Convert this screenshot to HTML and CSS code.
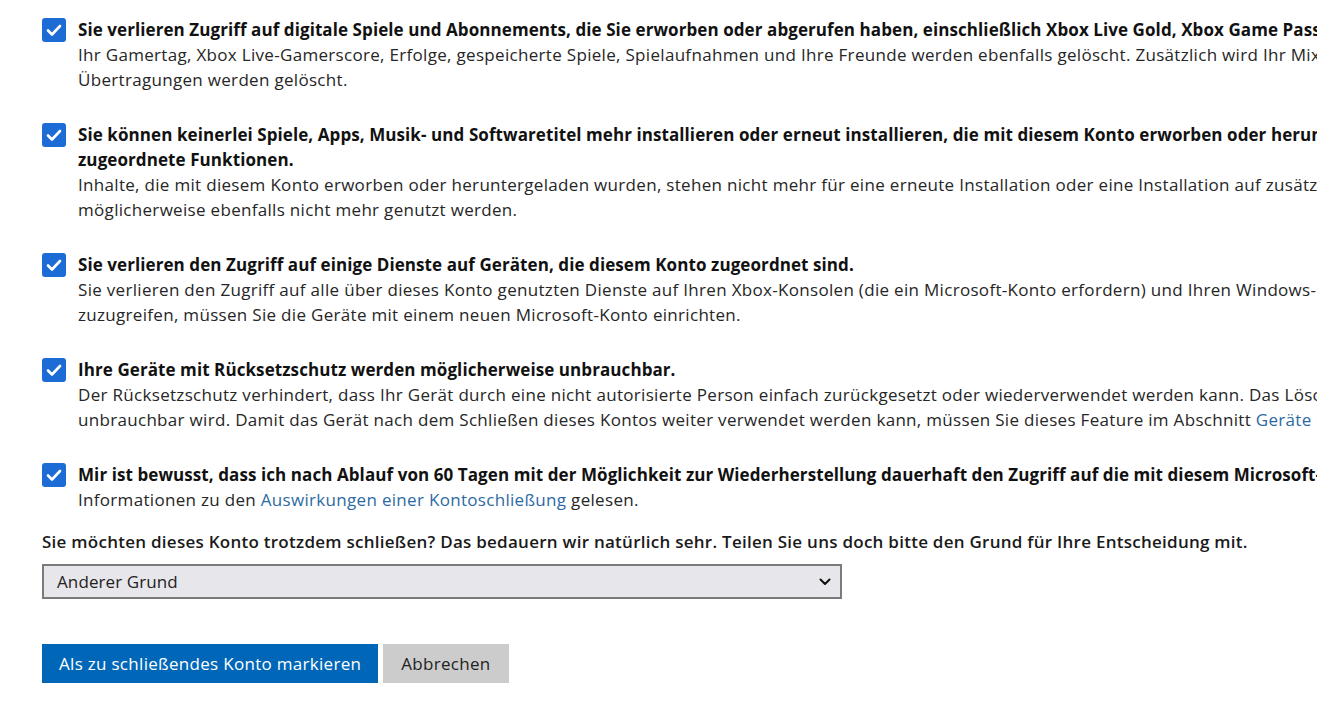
FILE: index.html
```html
<!DOCTYPE html>
<html lang="de">
<head>
<meta charset="utf-8">
<title>Konto schließen</title>
<link rel="stylesheet" href="styles.css">
</head>
<body>
<main class="page">
  <div class="item">
    <span class="check"><svg viewBox="0 0 24 24" width="24" height="24"><path d="M6 12.5l4 4 8-8.5" fill="none" stroke="#fff" stroke-width="2.6" stroke-linecap="round" stroke-linejoin="round"/></svg></span>
    <div class="text">
      <p class="title">Sie verlieren Zugriff auf digitale Spiele und Abonnements, die Sie erworben oder abgerufen haben, einschließlich Xbox Live Gold, Xbox Game Pass und EA Access.</p>
      <p class="desc">Ihr Gamertag, Xbox Live-Gamerscore, Erfolge, gespeicherte Spiele, Spielaufnahmen und Ihre Freunde werden ebenfalls gelöscht. Zusätzlich wird Ihr Mixer-Konto geschlossen, und alle<br>Übertragungen werden gelöscht.</p>
    </div>
  </div>
  <div class="item">
    <span class="check"><svg viewBox="0 0 24 24" width="24" height="24"><path d="M6 12.5l4 4 8-8.5" fill="none" stroke="#fff" stroke-width="2.6" stroke-linecap="round" stroke-linejoin="round"/></svg></span>
    <div class="text">
      <p class="title">Sie können keinerlei Spiele, Apps, Musik- und Softwaretitel mehr installieren oder erneut installieren, die mit diesem Konto erworben oder heruntergeladen wurden, sowie<br>zugeordnete Funktionen.</p>
      <p class="desc">Inhalte, die mit diesem Konto erworben oder heruntergeladen wurden, stehen nicht mehr für eine erneute Installation oder eine Installation auf zusätzlichen Geräten zur Verfügung und<br>möglicherweise ebenfalls nicht mehr genutzt werden.</p>
    </div>
  </div>
  <div class="item">
    <span class="check"><svg viewBox="0 0 24 24" width="24" height="24"><path d="M6 12.5l4 4 8-8.5" fill="none" stroke="#fff" stroke-width="2.6" stroke-linecap="round" stroke-linejoin="round"/></svg></span>
    <div class="text">
      <p class="title">Sie verlieren den Zugriff auf einige Dienste auf Geräten, die diesem Konto zugeordnet sind.</p>
      <p class="desc">Sie verlieren den Zugriff auf alle über dieses Konto genutzten Dienste auf Ihren Xbox-Konsolen (die ein Microsoft-Konto erfordern) und Ihren Windows-Geräten. Um wieder auf diese Dienste<br>zuzugreifen, müssen Sie die Geräte mit einem neuen Microsoft-Konto einrichten.</p>
    </div>
  </div>
  <div class="item">
    <span class="check"><svg viewBox="0 0 24 24" width="24" height="24"><path d="M6 12.5l4 4 8-8.5" fill="none" stroke="#fff" stroke-width="2.6" stroke-linecap="round" stroke-linejoin="round"/></svg></span>
    <div class="text">
      <p class="title">Ihre Geräte mit Rücksetzschutz werden möglicherweise unbrauchbar.</p>
      <p class="desc">Der Rücksetzschutz verhindert, dass Ihr Gerät durch eine nicht autorisierte Person einfach zurückgesetzt oder wiederverwendet werden kann. Das Löschen Ihres Kontos kann dazu führen, dass Ihr Gerät<br>unbrauchbar wird. Damit das Gerät nach dem Schließen dieses Kontos weiter verwendet werden kann, müssen Sie dieses Feature im Abschnitt <a href="#" class="link">Geräte</a> deaktivieren.</p>
    </div>
  </div>
  <div class="item item-last">
    <span class="check"><svg viewBox="0 0 24 24" width="24" height="24"><path d="M6 12.5l4 4 8-8.5" fill="none" stroke="#fff" stroke-width="2.6" stroke-linecap="round" stroke-linejoin="round"/></svg></span>
    <div class="text">
      <p class="title">Mir ist bewusst, dass ich nach Ablauf von 60 Tagen mit der Möglichkeit zur Wiederherstellung dauerhaft den Zugriff auf die mit diesem Microsoft-Konto verbundenen Daten verliere, und ich habe die</p>
      <p class="desc">Informationen zu den <a href="#" class="link">Auswirkungen einer Kontoschließung</a> gelesen.</p>
    </div>
  </div>

  <p class="question">Sie möchten dieses Konto trotzdem schließen? Das bedauern wir natürlich sehr. Teilen Sie uns doch bitte den Grund für Ihre Entscheidung mit.</p>
  <div class="select">
    <span>Anderer Grund</span>
    <svg class="chev" viewBox="0 0 12 8" width="12" height="8"><path d="M1.5 1.5l4.5 4.5 4.5-4.5" fill="none" stroke="#111" stroke-width="2" stroke-linecap="round" stroke-linejoin="round"/></svg>
  </div>

  <div class="actions">
    <button class="btn primary">Als zu schließendes Konto markieren</button>
    <button class="btn secondary">Abbrechen</button>
  </div>
</main>
</body>
</html>
```
FILE: styles.css
```css
html, body {
  margin: 0;
  padding: 0;
  background: #fff;
  overflow: hidden;
}
body {
  font-family: "Open Sans", "Noto Sans", "Liberation Sans", sans-serif;
  font-size: 17px;
  line-height: 25px;
  color: #222;
  letter-spacing: 0.31px;
}
.page {
  padding: 17px 0 0 42px;
  width: 1275px;
  overflow: hidden;
  white-space: nowrap;
}
.item {
  display: flex;
  gap: 12px;
  align-items: flex-start;
  margin-bottom: 30px;
}
.item-last { margin-bottom: 17px; }
.check {
  flex: 0 0 24px;
  width: 24px;
  height: 24px;
  margin-top: 1px;
  border-radius: 3px;
  background: #1d6bd5;
  display: flex;
}
.text p { margin: 0; }
.title {
  font-weight: 700;
  color: #111;
  letter-spacing: 0.08px;
}
.desc { color: #262626; }
.link {
  color: #2d6aa3;
  text-decoration: none;
}
.question {
  margin: 0 0 10px;
  font-weight: 600;
  color: #1a1a1a;
  letter-spacing: 0.26px;
}
.select {
  box-sizing: border-box;
  width: 800px;
  height: 35px;
  border: 2px solid #7b7b7b;
  background: #e7e6eb;
  display: flex;
  align-items: center;
  justify-content: space-between;
  padding: 0 8px 0 13px;
  color: #222;
  letter-spacing: 0.1px;
}
.chev { display: block; margin-right: 1px; }
.actions {
  display: flex;
  gap: 5px;
  margin-top: 45px;
}
.btn {
  font: inherit;
  letter-spacing: 0.3px;
  height: 39px;
  border: 0;
  padding: 0 17px;
  border-radius: 0;
}
.primary {
  background: #0067b8;
  color: #fff;
}
.secondary {
  background: #cccccc;
  color: #222;
  padding: 0 18px;
}
```
